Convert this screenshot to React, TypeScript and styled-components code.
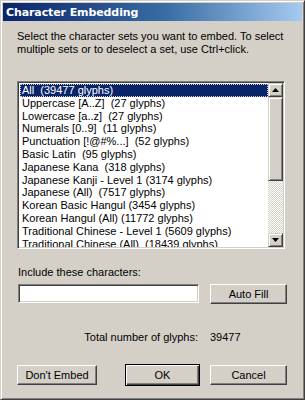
import React from 'react'
import styled, { createGlobalStyle } from 'styled-components'

const GlobalStyle = createGlobalStyle`
  html, body {
    margin: 0;
    padding: 0;
    background: #d4d0c8;
  }
  * {
    box-sizing: border-box;
  }
`

const face = '#d4d0c8'
const font = `"Liberation Sans", Arial, sans-serif`

const Window = styled.div`
  width: 305px;
  height: 400px;
  display: flex;
  flex-direction: column;
  background: ${face};
  border: 1px solid;
  border-color: ${face} #404040 #404040 ${face};
  box-shadow: inset 1px 1px #fff, inset -1px -1px #808080;
  padding: 2px;
  font-family: ${font};
  font-size: 11px;
  color: #000;
`

const TitleBar = styled.div`
  height: 18px;
  display: flex;
  align-items: center;
  padding-left: 3px;
  background: linear-gradient(to right, #0a246a 0%, #3a6ea5 55%, #a6caf0 100%);
  color: #fff;
  font-family: "DejaVu Sans", Verdana, sans-serif;
  font-weight: bold;
  font-size: 11px;
  letter-spacing: -0.1px;
`

const Body = styled.div`
  flex: 1;
  display: flex;
  flex-direction: column;
  padding: 9px 0 0 14px;
`

const Intro = styled.p`
  margin: 0;
  width: 270px;
  line-height: 13px;
`

const ListBox = styled.div`
  margin-top: 25px;
  width: 268px;
  height: 168px;
  display: flex;
  border: 1px solid;
  border-color: #808080 #fff #fff #808080;
  box-shadow: inset 1px 1px #404040, inset -1px -1px ${face};
  padding: 1px;
  background: #fff;
`

const Items = styled.div`
  flex: 1;
  overflow: hidden;
  padding: 1px 0 0 1px;
`

const Item = styled.div<{ $selected?: boolean }>`
  height: 12.8px;
  line-height: 12.8px;
  padding-left: 2px;
  white-space: pre;
  background: ${({ $selected }) => ($selected ? '#0a246a' : 'transparent')};
  color: ${({ $selected }) => ($selected ? '#fff' : '#000')};
  outline: ${({ $selected }) => ($selected ? '1px dotted #d4d0c8' : 'none')};
  outline-offset: -1px;
`

const ScrollBar = styled.div`
  width: 15px;
  display: flex;
  flex-direction: column;
  background: repeating-conic-gradient(#fff 0 25%, ${face} 0 50%) 0 0 / 2px 2px;
`

const Raised = styled.div`
  background: ${face};
  border: 1px solid;
  border-color: ${face} #404040 #404040 ${face};
  box-shadow: inset 1px 1px #fff, inset -1px -1px #808080;
`

const ArrowButton = styled(Raised)`
  height: 14px;
  display: flex;
  align-items: center;
  justify-content: center;
`

const Thumb = styled(Raised)`
  height: 84px;
`

const Track = styled.div`
  flex: 1;
`

const Label = styled.div`
  margin-top: 17px;
  line-height: 13px;
  padding-left: 1px;
`

const Row = styled.div`
  display: grid;
  grid-template-columns: 182px 77px;
  column-gap: 11px;
  width: 270px;
`

const InputRow = styled(Row)`
  margin-top: 5px;
  height: 19px;
`

const TextInput = styled.div`
  height: 19px;
  margin-left: 1px;
  background: #fff;
  border: 1px solid;
  border-color: #808080 #fff #fff #808080;
  box-shadow: inset 1px 1px #404040, inset -1px -1px ${face};
`

const Button = styled.div<{ $default?: boolean; $width?: number }>`
  height: ${({ $default }) => ($default ? 22 : 20)}px;
  width: ${({ $width }) => ($width ? `${$width}px` : 'auto')};
  display: flex;
  align-items: center;
  justify-content: center;
  background: ${face};
  border: 1px solid;
  border-color: ${({ $default }) =>
    $default ? '#000' : `#fff #404040 #404040 #fff`};
  box-shadow: ${({ $default }) =>
    $default
      ? `inset 1px 1px #fff, inset -1px -1px #404040, inset -2px -2px #808080`
      : `inset -1px -1px #808080`};
`

const TotalRow = styled(Row)`
  margin-top: 28px;
  line-height: 13px;
`

const TotalLabel = styled.div`
  text-align: right;
  padding-right: 1px;
`

const Buttons = styled.div`
  margin-top: 20px;
  display: flex;
  align-items: center;
  width: 270px;
`

const Spacer = styled.div<{ $w: number }>`
  width: ${({ $w }) => $w}px;
`

const items = [
  'All  (39477 glyphs)',
  'Uppercase [A..Z]  (27 glyphs)',
  'Lowercase [a..z]  (27 glyphs)',
  'Numerals [0..9]  (11 glyphs)',
  'Punctuation [!@#%...]  (52 glyphs)',
  'Basic Latin  (95 glyphs)',
  'Japanese Kana  (318 glyphs)',
  'Japanese Kanji - Level 1 (3174 glyphs)',
  'Japanese (All)  (7517 glyphs)',
  'Korean Basic Hangul (3454 glyphs)',
  'Korean Hangul (All) (11772 glyphs)',
  'Traditional Chinese - Level 1 (5609 glyphs)',
  'Traditional Chinese (All)  (18439 glyphs)',
]

const Arrow = ({ up }: { up?: boolean }) => (
  <svg width="7" height="4" viewBox="0 0 7 4">
    <path d={up ? 'M3.5 0 L7 4 L0 4 Z' : 'M0 0 L7 0 L3.5 4 Z'} fill="#000" />
  </svg>
)

const App: React.FC = () => {
  return (
    <>
      <GlobalStyle />
      <Window>
        <TitleBar>Character Embedding</TitleBar>
        <Body>
          <Intro>
            Select the character sets you want to embed. To select multiple
            sets or to deselect a set, use Ctrl+click.
          </Intro>
          <ListBox>
            <Items>
              {items.map((item, i) => (
                <Item key={item} $selected={i === 0}>
                  {item}
                </Item>
              ))}
            </Items>
            <ScrollBar>
              <ArrowButton>
                <Arrow up />
              </ArrowButton>
              <Thumb />
              <Track />
              <ArrowButton>
                <Arrow />
              </ArrowButton>
            </ScrollBar>
          </ListBox>
          <Label>Include these characters:</Label>
          <InputRow>
            <TextInput />
            <Button>Auto Fill</Button>
          </InputRow>
          <TotalRow>
            <TotalLabel>Total number of glyphs:</TotalLabel>
            <div>39477</div>
          </TotalRow>
          <Buttons>
            <Button $width={80}>Don't Embed</Button>
            <Spacer $w={28} />
            <Button $default $width={75}>
              OK
            </Button>
            <Spacer $w={10} />
            <Button $width={77}>Cancel</Button>
          </Buttons>
        </Body>
      </Window>
    </>
  )
}

export default App
